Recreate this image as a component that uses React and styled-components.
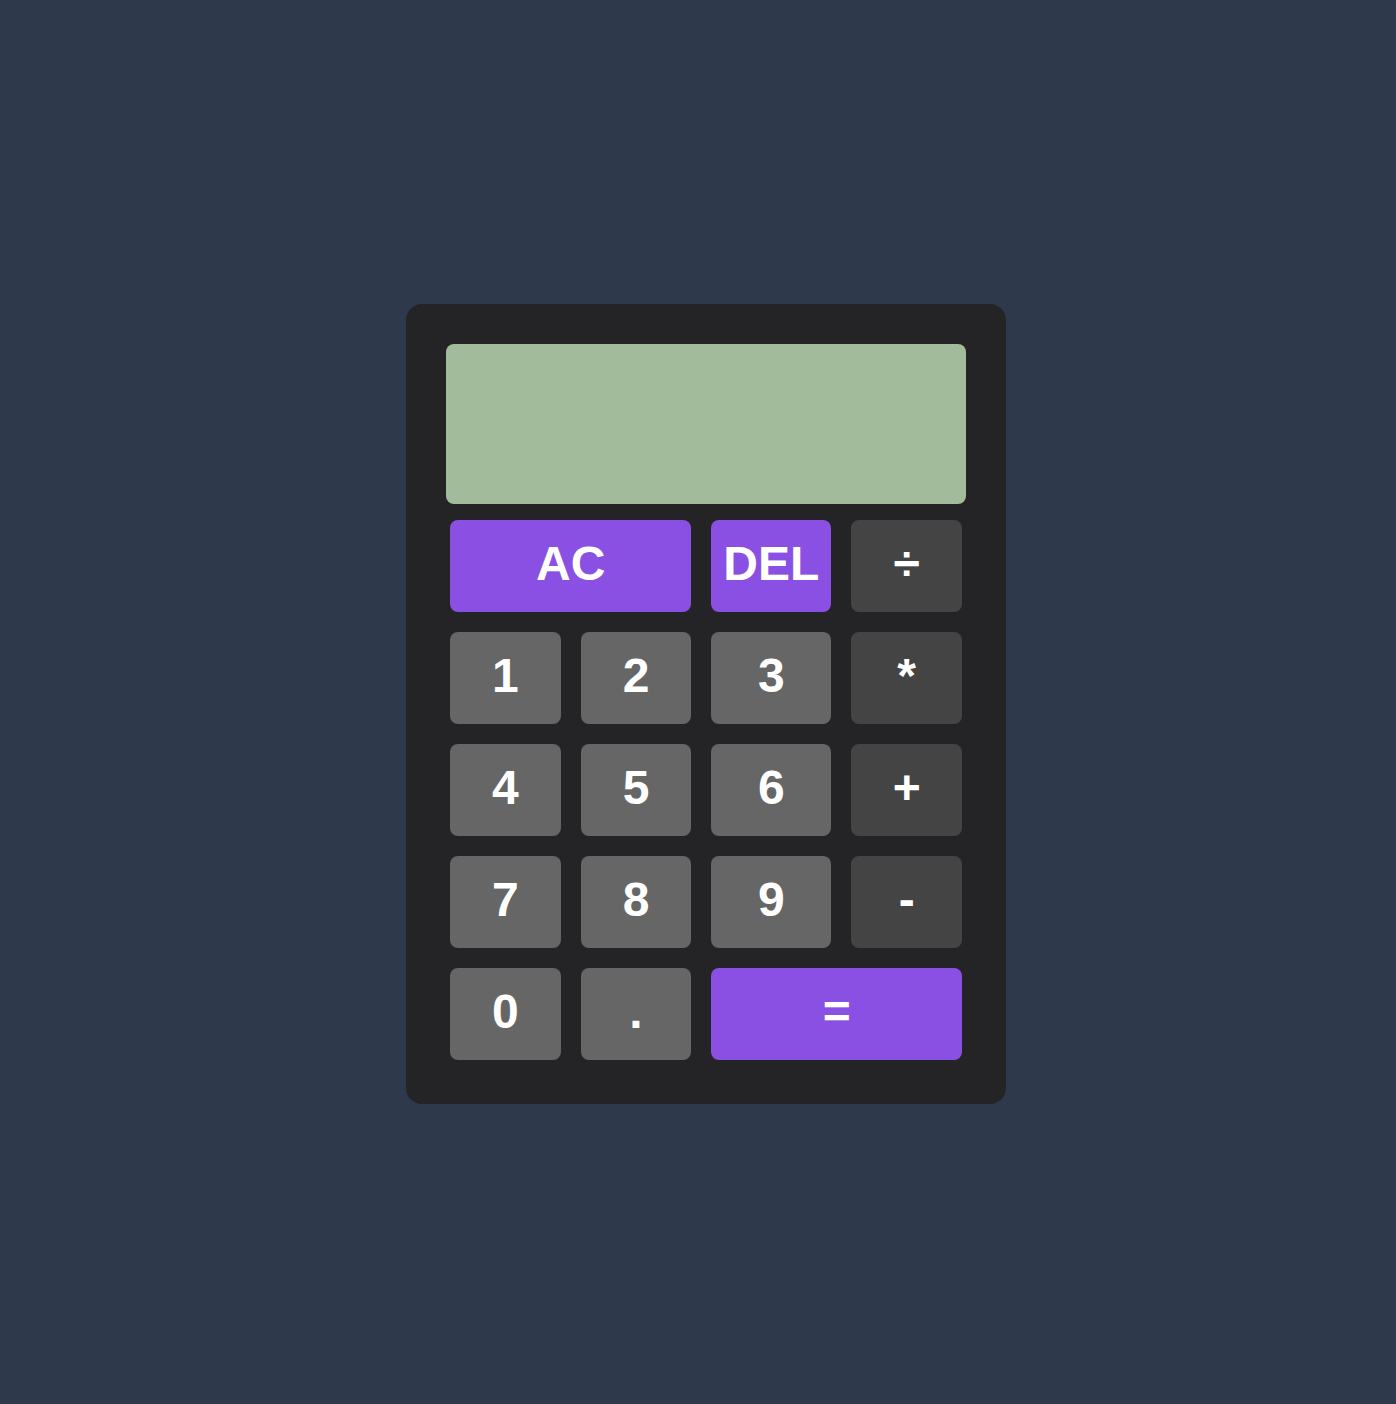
import styled, { createGlobalStyle } from "styled-components";

const GlobalStyle = createGlobalStyle`
    body {
        margin: 0;
        background: #2f394c;
        font-family: "Liberation Sans", Arial, sans-serif;
    }
`;

const Page = styled.div`
    min-height: 100vh;
    box-sizing: border-box;
    padding: 4px 0 0 16px;
    display: flex;
    justify-content: center;
    align-items: center;
`;

const Body = styled.div`
    width: 600px;
    height: 800px;
    box-sizing: border-box;
    padding: 40px;
    background: #242426;
    border-radius: 16px;
    display: flex;
    flex-direction: column;
    gap: 12px;
`;

const Screen = styled.div`
    height: 160px;
    background: #a2bb9a;
    border-radius: 8px;
`;

const Keys = styled.div`
    margin: 4px;
    display: grid;
    grid-template-columns: repeat(4, 1fr);
    grid-auto-rows: 92px;
    gap: 20px;
`;

const Key = styled.button`
    grid-column: span ${(p) => p.$span || 1};
    border: none;
    border-radius: 8px;
    padding: 0 12px 5px;
    font-family: "Liberation Sans", Arial, sans-serif;
    font-weight: 700;
    font-size: 48px;
    color: #fff;
    background: ${(p) =>
        p.$kind === "accent" ? "#8a4fe3" : p.$kind === "op" ? "#444444" : "#666666"};
    display: flex;
    align-items: center;
    justify-content: center;
    cursor: pointer;
`;

const keys = [
    { label: "AC", kind: "accent", span: 2 },
    { label: "DEL", kind: "accent" },
    { label: "÷", kind: "op" },
    { label: "1" }, { label: "2" }, { label: "3" },
    { label: "*", kind: "op" },
    { label: "4" }, { label: "5" }, { label: "6" },
    { label: "+", kind: "op" },
    { label: "7" }, { label: "8" }, { label: "9" },
    { label: "-", kind: "op" },
    { label: "0" }, { label: "." },
    { label: "=", kind: "accent", span: 2 },
];

const App = () => {
    return (
        <>
            <GlobalStyle />
            <Page>
                <Body>
                    <Screen />
                    <Keys>
                        {keys.map((k) => (
                            <Key key={k.label} $kind={k.kind} $span={k.span}>
                                {k.label}
                            </Key>
                        ))}
                    </Keys>
                </Body>
            </Page>
        </>
    );
};

export default App;
